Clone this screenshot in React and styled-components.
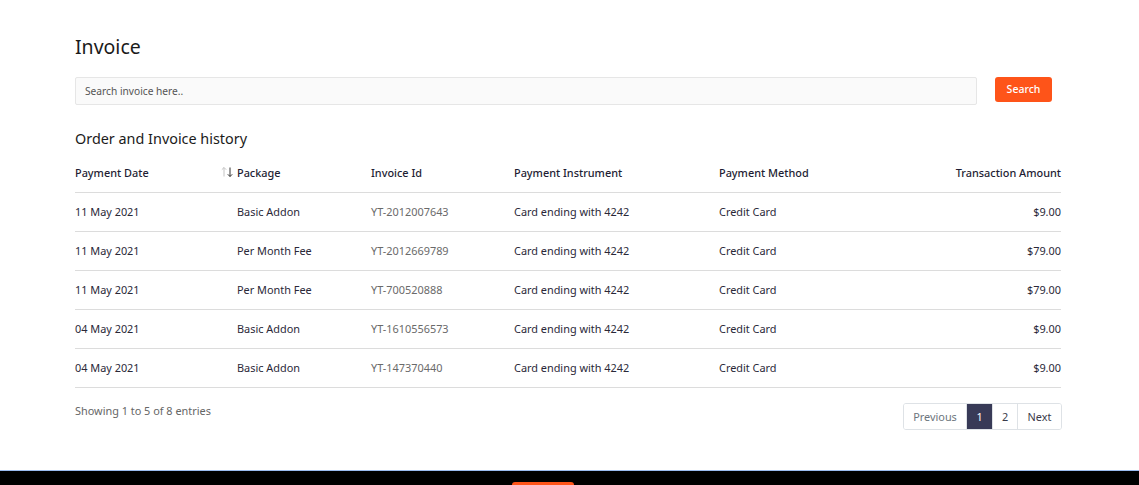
import React from "react";
import styled, { createGlobalStyle } from "styled-components";

const GlobalStyle = createGlobalStyle`
  html, body { margin: 0; padding: 0; background: #fff; }
  body { font-family: "Noto Sans", "Open Sans", sans-serif; color: #212529; }
  * { box-sizing: border-box; }
`;

const Page = styled.div`
  height: 470px;
  padding: 30px 0 0;
`;

const Container = styled.div`
  width: 986px;
  margin: 0 0 0 75px;
`;

const Title = styled.h1`
  margin: 0;
  font-size: 19.5px;
  font-weight: 400;
  line-height: 34px;
  color: #1b1b1b;
`;

const SearchRow = styled.div`
  display: flex;
  align-items: flex-start;
  gap: 18px;
  margin-top: 13px;
`;

const SearchInput = styled.input`
  width: 902px;
  height: 28px;
  border: 1px solid #e6e6e6;
  border-radius: 2px;
  background: #fafafa;
  padding: 0 9px;
  font-family: inherit;
  font-size: 10.2px;
  color: #333;
  outline: none;
  &::placeholder { color: #555; }
`;

const SearchButton = styled.button`
  width: 57px;
  height: 25px;
  border: none;
  border-radius: 3px;
  background: #fe5419;
  color: #fff;
  font-family: inherit;
  font-size: 10.5px;
  font-weight: 500;
  padding: 0 0 2px;
  cursor: pointer;
`;

const Subtitle = styled.h2`
  margin: 23px 0 0;
  font-size: 14.4px;
  font-weight: 400;
  line-height: 22px;
  color: #1b1b1b;
`;

const Table = styled.table`
  width: 100%;
  border-collapse: collapse;
  table-layout: fixed;
  margin-top: 3px;
`;

const Th = styled.th`
  position: relative;
  height: 39px;
  padding: 0;
  text-align: ${(p) => (p.$right ? "right" : "left")};
  width: ${(p) => (p.$w ? `${p.$w}px` : "auto")};
  font-size: 10.9px;
  font-weight: 500;
  color: #1e1d33;
  border-bottom: 1px solid #dcdcdc;
`;

const SortIcon = styled.span`
  position: absolute;
  right: 4px;
  top: 50%;
  transform: translateY(-50%);
  display: flex;
  align-items: center;
`;

const Td = styled.td`
  height: 39px;
  padding: 0;
  text-align: ${(p) => (p.$right ? "right" : "left")};
  font-size: 10.9px;
  color: ${(p) => (p.$muted ? "#6a6a6a" : "#2a2838")};
  border-bottom: 1px solid #dcdcdc;
`;

const Footer = styled.div`
  display: flex;
  justify-content: space-between;
  align-items: flex-start;
  margin-top: 15px;
`;

const Info = styled.div`
  font-size: 10.9px;
  color: #666;
  line-height: 16px;
`;

const Pager = styled.div`
  display: flex;
  margin-right: -1px;
  border: 1px solid #dee2e6;
  border-radius: 3px;
  overflow: hidden;
`;

const PageBtn = styled.span`
  display: flex;
  align-items: center;
  justify-content: center;
  height: 25px;
  width: ${(p) => p.$w}px;
  font-size: 10.9px;
  color: ${(p) => (p.$active ? "#fff" : p.$disabled ? "#6c757d" : "#3a3a4a")};
  background: ${(p) => (p.$active ? "#383a57" : "#fff")};
  border-left: ${(p) => (p.$first ? "none" : "1px solid #dee2e6")};
`;

const BottomBar = styled.div`
  height: 15px;
  background: #000;
  border-top: 1px solid #9bbcf0;
  display: flex;
  justify-content: center;
  overflow: hidden;
`;

const BarButton = styled.div`
  width: 62px;
  height: 20px;
  margin-top: 11px;
  margin-left: -53px;
  background: #fe5419;
  border-radius: 3px;
`;

const rows = [
  ["11 May 2021", "Basic Addon", "YT-2012007643", "$9.00"],
  ["11 May 2021", "Per Month Fee", "YT-2012669789", "$79.00"],
  ["11 May 2021", "Per Month Fee", "YT-700520888", "$79.00"],
  ["04 May 2021", "Basic Addon", "YT-1610556573", "$9.00"],
  ["04 May 2021", "Basic Addon", "YT-147370440", "$9.00"],
];

function Sort() {
  return (
    <svg width="12" height="11" viewBox="0 0 12 11">
      <path d="M3 10V1M0.8 3.2L3 1l2.2 2.2" stroke="#c4c4c4" strokeWidth="1" fill="none" />
      <path d="M9 1v9M6.8 7.8L9 10l2.2-2.2" stroke="#333" strokeWidth="1" fill="none" />
    </svg>
  );
}

export default function App() {
  return (
    <>
      <GlobalStyle />
      <Page>
        <Container>
          <Title>Invoice</Title>
          <SearchRow>
            <SearchInput placeholder="Search invoice here.." />
            <SearchButton>Search</SearchButton>
          </SearchRow>
          <Subtitle>Order and Invoice history</Subtitle>
          <Table>
            <thead>
              <tr>
                <Th $w={162}>
                  Payment Date
                  <SortIcon>
                    <Sort />
                  </SortIcon>
                </Th>
                <Th $w={134}>Package</Th>
                <Th $w={143}>Invoice Id</Th>
                <Th $w={205}>Payment Instrument</Th>
                <Th>Payment Method</Th>
                <Th $right>Transaction Amount</Th>
              </tr>
            </thead>
            <tbody>
              {rows.map((r, i) => (
                <tr key={i}>
                  <Td>{r[0]}</Td>
                  <Td>{r[1]}</Td>
                  <Td $muted>{r[2]}</Td>
                  <Td>Card ending with 4242</Td>
                  <Td>Credit Card</Td>
                  <Td $right>{r[3]}</Td>
                </tr>
              ))}
            </tbody>
          </Table>
          <Footer>
            <Info>Showing 1 to 5 of 8 entries</Info>
            <Pager>
              <PageBtn $first $w={62} $disabled>Previous</PageBtn>
              <PageBtn $w={26} $active>1</PageBtn>
              <PageBtn $w={25}>2</PageBtn>
              <PageBtn $w={44}>Next</PageBtn>
            </Pager>
          </Footer>
        </Container>
      </Page>
      <BottomBar>
        <BarButton />
      </BottomBar>
    </>
  );
}
